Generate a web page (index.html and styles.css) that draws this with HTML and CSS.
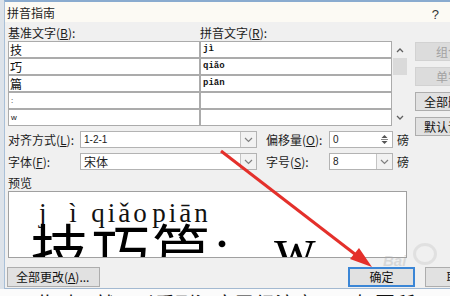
FILE: index.html
```html
<html>
<head>
<link rel="stylesheet" href="styles.css">
</head>
<body>
<div class="dlg">
	<div class="titlebar">
		<span>拼音指南</span>
		<span class="help">?</span>
	</div>
	<div class="main">
		<div class="top">
			<div class="cols">
				<div class="heads">
					<span class="head">基准文字(<u>B</u>):</span>
					<span class="head">拼音文字(<u>R</u>):</span>
				</div>
				<div class="grid">
					<div class="cell">技</div><div class="cell py">jì</div>
					<div class="cell">巧</div><div class="cell py">qiǎo</div>
					<div class="cell">篇</div><div class="cell py">piān</div>
					<div class="cell tiny">:</div><div class="cell py"></div>
					<div class="cell tiny">w</div><div class="cell py"></div>
				</div>
			</div>
			<div class="sb">
				<svg class="arr-up" width="16" height="8" viewBox="0 0 16 8"><polyline points="5,6 8,3 11,6" fill="none" stroke="#606060" stroke-width="1.3"/></svg>
				<div class="thumb"></div>
				<svg class="arr-down" width="16" height="8" viewBox="0 0 16 8"><polyline points="5,2 8,5 11,2" fill="none" stroke="#606060" stroke-width="1.3"/></svg>
			</div>
			<div class="btns">
				<div class="btn off">组合</div>
				<div class="btn off">单字</div>
				<div class="btn">全部删除</div>
				<div class="btn">默认读音</div>
			</div>
		</div>

		<div class="opt">
			<span class="lab">对齐方式(<u>L</u>):</span>
			<div class="combo wide"><span class="val num">1-2-1</span><span class="dd"><svg width="9" height="6" viewBox="0 0 9 6"><polyline points="1,1 4.5,4.5 8,1" fill="none" stroke="#808080" stroke-width="1.2"/></svg></span></div>
			<span class="lab2">偏移量(<u>O</u>):</span>
			<div class="combo small"><span class="val num">0</span><span class="spin"><svg width="9" height="13" viewBox="0 0 9 13"><polygon points="1.5,5 4.5,2 7.5,5" fill="#555"/><line x1="1" y1="6.5" x2="8" y2="6.5" stroke="#888"/><polygon points="1.5,8 4.5,11 7.5,8" fill="#555"/></svg></span></div>
			<span class="unit">磅</span>
		</div>
		<div class="opt">
			<span class="lab">字体(<u>F</u>):</span>
			<div class="combo wide"><span class="val">宋体</span><span class="dd"><svg width="9" height="6" viewBox="0 0 9 6"><polyline points="1,1 4.5,4.5 8,1" fill="none" stroke="#808080" stroke-width="1.2"/></svg></span></div>
			<span class="lab2">字号(<u>S</u>):</span>
			<div class="combo small"><span class="val num">8</span><span class="dd"><svg width="9" height="6" viewBox="0 0 9 6"><polyline points="1,1 4.5,4.5 8,1" fill="none" stroke="#808080" stroke-width="1.2"/></svg></span></div>
			<span class="unit">磅</span>
		</div>

		<div class="prev-lab">预览</div>
		<div class="preview">
			<div class="py-row">
				<span class="col">j ì</span>
				<span class="col">qiǎo</span>
				<span class="col">piān</span>
			</div>
			<div class="han-row">
				<span class="col">技</span>
				<span class="col">巧</span>
				<span class="col">篇</span>
				<span class="colon">:</span>
				<span class="wch">w</span>
			</div>
		</div>

		<div class="bottom">
			<div class="btn all">全部更改(<u>A</u>)...</div>
			<div class="btn ok">确定</div>
			<div class="btn cancel">取消</div>
		</div>
	</div>
</div>
<div class="page">2、此时，就可以看到汉字已经注音了，如图所示。</div>

<svg class="arrow" width="450" height="296" viewBox="0 0 450 296">
	<line x1="221" y1="151" x2="360" y2="258" stroke="#e4302b" stroke-width="3"/>
	<polygon points="372,267 350,259 359,248" fill="#e4302b"/>
</svg>
<div class="mark">Bai<span class="paw"></span></div>
</body>
</html>
```

FILE: styles.css
```css
body {
	margin: 0;
	width: 450px;
	height: 296px;
	overflow: hidden;
	position: relative;
	background: #dde3ea;
	font-family: "Noto Sans CJK SC", sans-serif;
	font-size: 12px;
	color: #1c1c1c;
}
u {
	text-decoration: underline;
}
.dlg {
	margin-left: 4px;
	width: 445px;
	height: 286px;
	overflow: hidden;
	background: #f0f0f0;
	border-top: 2px solid #8aabcf;
	border-left: 1px solid #a9c0d8;
	border-bottom: 1px solid #a3b9d1;
}
.titlebar {
	height: 20px;
	box-sizing: border-box;
	padding: 4px 11px 0 2px;
	line-height: 14px;
	background: #fcfaf4;
	display: flex;
	justify-content: space-between;
}
.help {
	font-family: "Liberation Sans", sans-serif;
	font-size: 13px;
	color: #333;
	padding-top: 2px;
}
.main {
	padding: 4px 0 0 3px;
}
.top {
	display: flex;
	align-items: flex-start;
	height: 100px;
}
.cols {
	width: 384px;
}
.heads {
	display: flex;
	height: 15px;
	line-height: 14px;
}
.head {
	width: 192px;
}
.grid {
	display: grid;
	grid-template-columns: 192px 192px;
	grid-auto-rows: 17px;
}
.cell {
	background: #fff;
	border: 1px solid #ababab;
	padding-left: 1px;
	line-height: 15px;
	font-size: 12px;
	color: #111;
}
.cell.tiny {
	font-family: "Liberation Sans", sans-serif;
	font-size: 8px;
	padding-left: 2px;
}
.cell.py {
	font-family: "Liberation Mono", monospace;
	font-size: 9px;
	font-weight: bold;
	padding-left: 2px;
}
.sb {
	width: 16px;
	height: 85px;
	margin-top: 15px;
	display: flex;
	flex-direction: column;
	align-items: center;
}
.arr-up {
	margin-top: 5px;
}
.thumb {
	width: 14px;
	height: 17px;
	margin-top: 4px;
	background: #dadada;
}
.arr-down {
	margin-top: 39px;
}
.btns {
	margin-left: 7px;
	margin-top: 16px;
	display: flex;
	flex-direction: column;
	gap: 6px;
}
.btn {
	box-sizing: border-box;
	height: 19px;
	width: 66px;
	flex-shrink: 0;
	background: #e1e1e1;
	border: 1px solid #adadad;
	line-height: 17px;
	text-align: center;
	color: #111;
}
.btn.off {
	background: #dcdcdc;
	border-color: #d2d2d2;
	color: #a3a3a3;
}
.opt {
	display: flex;
	align-items: center;
	height: 17px;
	margin-top: 5px;
}
.lab {
	width: 72px;
}
.lab2 {
	width: 63px;
	margin-left: 9px;
}
.unit {
	margin-left: 4px;
}
.combo {
	box-sizing: border-box;
	height: 17px;
	background: #fff;
	border: 1px solid #b3b3b3;
	display: flex;
}
.combo.wide {
	width: 177px;
}
.combo.small {
	width: 64px;
}
.val {
	flex: 1;
	padding-left: 3px;
	line-height: 15px;
}
.val.num {
	font-family: "Liberation Sans", sans-serif;
	font-size: 10px;
}
.dd, .spin {
	width: 15px;
	background: #f2f2f2;
	border-left: 1px solid #c4c4c4;
	display: flex;
	align-items: center;
	justify-content: center;
}
.spin {
	background: #fff;
	border-left: none;
}
.prev-lab {
	margin-top: 6px;
	line-height: 14px;
	height: 15px;
}
.preview {
	box-sizing: border-box;
	width: 399px;
	height: 67px;
	background: #fff;
	border: 1px solid #a0a0a0;
	overflow: hidden;
	padding: 12px 0 0 20px;
}
.py-row {
	display: flex;
	font-family: "Liberation Serif", serif;
	font-size: 27px;
	letter-spacing: 3px;
	word-spacing: 10px;
	line-height: 19px;
	height: 19px;
	color: #111;
}
.han-row {
	display: flex;
	font-size: 58px;
	line-height: 50px;
	color: #000;
}
.col {
	width: 61px;
	text-align: center;
	flex-shrink: 0;
}
.colon {
	width: 20px;
	text-align: center;
	font-family: "Liberation Serif", serif;
}
.wch {
	margin-left: 42px;
	font-family: "Liberation Serif", serif;
}
.bottom {
	display: flex;
	margin-top: 9px;
}
.btn.all {
	width: 93px;
	height: 20px;
	margin-left: -1px;
	text-align: left;
	padding-left: 8px;
}
.btn.ok {
	width: 67px;
	height: 20px;
	margin-left: 248px;
	border: 2px solid #3b86d6;
	line-height: 16px;
}
.btn.cancel {
	width: 67px;
	height: 20px;
	margin-left: 10px;
}
.page {
	height: 7px;
	overflow: hidden;
	background: #fbfbfb;
	font-size: 20px;
	line-height: 30px;
	color: #111;
	padding-left: 4px;
	white-space: nowrap;
}
.arrow {
	position: absolute;
	left: 0;
	top: 0;
	pointer-events: none;
}
.mark {
	position: absolute;
	left: 383px;
	top: 252px;
	font-family: "Liberation Sans", sans-serif;
	font-weight: bold;
	font-style: italic;
	font-size: 15px;
	color: rgba(170, 170, 170, 0.35);
}
.paw {
	position: absolute;
	left: 30px;
	top: -9px;
	width: 18px;
	height: 16px;
	border: 3px solid rgba(190, 190, 190, 0.3);
	border-radius: 50%;
}
```
